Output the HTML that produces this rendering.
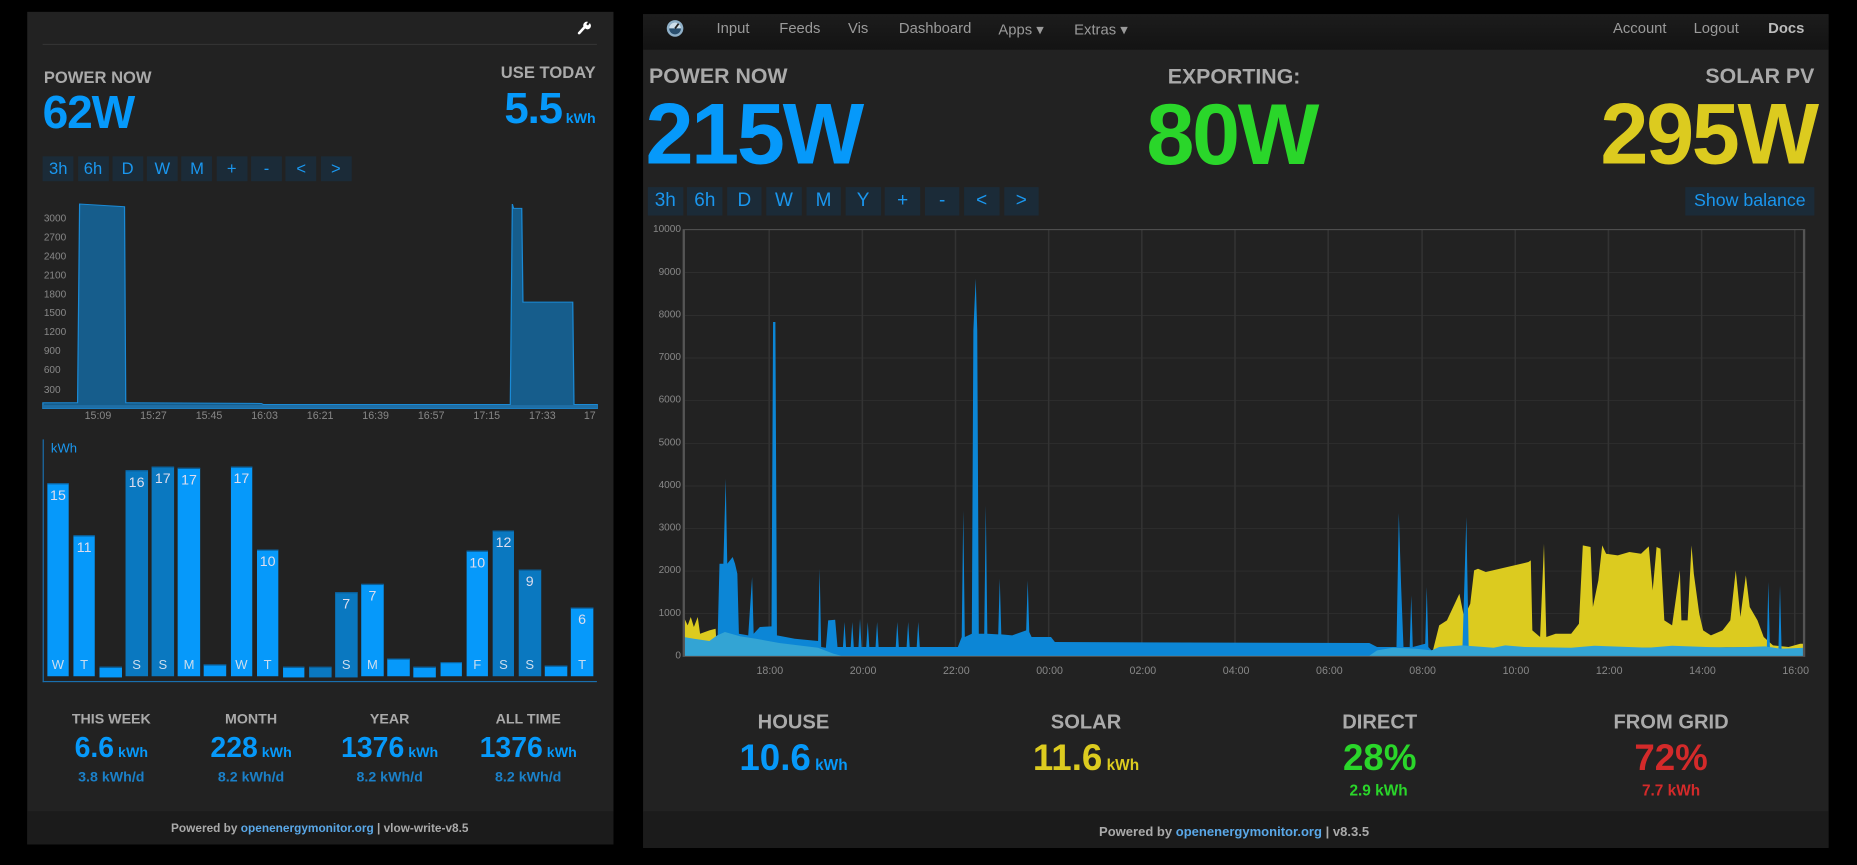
<!DOCTYPE html>
<html><head><meta charset="utf-8"><style>
*{margin:0;padding:0;box-sizing:border-box}
html,body{width:1857px;height:864px;background:#000;overflow:hidden;font-family:"Liberation Sans",sans-serif}
#s{position:absolute;left:0;top:0;width:1568px;height:730px;transform:scale(1.18431);transform-origin:0 0}
.a{position:absolute;white-space:nowrap}
.g{color:#aaa;font-weight:bold}
.b{color:#0699fa;font-weight:bold}
.btn{position:absolute;background:#1b2b38;color:#1a97ef;text-align:center}
.yl{position:absolute;font-size:9px;color:#888}
.xl{position:absolute;font-size:9px;color:#888;transform:translateX(-50%)}
.c{transform:translate(-50%,-50%);text-align:center}
</style></head><body><div id="s">
<!-- LEFT PANEL -->
<div class="a" style="left:23px;top:10px;width:495px;height:703px;background:#222"></div>
<div class="a" style="left:23px;top:685px;width:495px;height:28px;background:#1b1b1b"></div>
<div class="a" style="left:36px;top:37px;width:468px;height:1px;background:#333"></div>
<svg class="a" style="left:487px;top:17px" width="12" height="12" viewBox="0 0 12 12"><path d="M2 11 L7 5.5" stroke="#fff" stroke-width="2.2" stroke-linecap="round"/><path d="M6 6 A3 3 0 0 1 9.5 1.5 L8 3.5 L9.5 4.5 L11 2.5 A3 3 0 0 1 7 7 Z" fill="#fff"/></svg>
<div class="a g" style="left:37px;top:57px;font-size:14px">POWER NOW</div>
<div class="a b" style="left:36px;top:74px;font-size:39px;letter-spacing:-1px">62W</div>
<div class="a g" style="right:1065px;top:53px;font-size:14px">USE TODAY</div>
<div class="a b" style="right:1065px;top:71px;font-size:37px"><span style="letter-spacing:-1px">5.5</span><span style="font-size:12px"> kWh</span></div>
<div id="lb"></div>
<svg class="a" style="left:0;top:0" width="540.5" height="363.2" viewBox="0 0 1568 1290" preserveAspectRatio="none">
<path d="M105,1225 L105,1208 L190,1208 L195,612 L305,620 L308,1208 L640,1210 L645,1213 L1250,1213 L1255,612 L1258,625 L1278,625 L1281,906 L1403,906 L1406,1213 L1463,1213 L1463,1225 Z" fill="#165d8c" stroke="#1a8ad6" stroke-width="3"/>
<rect x="105" y="1215" width="1358" height="10" fill="#1f6ea5"/>
</svg>
<div id="lax"></div>
<div class="a" style="left:36px;top:371px;width:1px;height:205px;background:#1a6fae"></div>
<div class="a" style="left:36px;top:575px;width:468px;height:1px;background:#1a6fae"></div>
<div class="a" style="left:43px;top:373px;font-size:11px;color:#1a97ef">kWh</div>
<div id="bars"></div>
<div class="a g c" style="left:94px;top:607px;font-size:12px">THIS WEEK</div>
<div class="a g c" style="left:212px;top:607px;font-size:12px">MONTH</div>
<div class="a g c" style="left:329px;top:607px;font-size:12px">YEAR</div>
<div class="a g c" style="left:446px;top:607px;font-size:12px">ALL TIME</div>
<div class="a b c" style="left:94px;top:632px;font-size:24px">6.6<span style="font-size:12px"> kWh</span></div>
<div class="a b c" style="left:212px;top:632px;font-size:24px">228<span style="font-size:12px"> kWh</span></div>
<div class="a b c" style="left:329px;top:632px;font-size:24px">1376<span style="font-size:12px"> kWh</span></div>
<div class="a b c" style="left:446px;top:632px;font-size:24px">1376<span style="font-size:12px"> kWh</span></div>
<div class="a c" style="left:94px;top:656px;font-size:12px;font-weight:bold;color:#1b80c8">3.8 kWh/d</div>
<div class="a c" style="left:212px;top:656px;font-size:12px;font-weight:bold;color:#1b80c8">8.2 kWh/d</div>
<div class="a c" style="left:329px;top:656px;font-size:12px;font-weight:bold;color:#1b80c8">8.2 kWh/d</div>
<div class="a c" style="left:446px;top:656px;font-size:12px;font-weight:bold;color:#1b80c8">8.2 kWh/d</div>
<div class="a c" style="left:270px;top:700px;font-size:10px;font-weight:bold;color:#aaa">Powered by <span style="color:#5aa8e8">openenergymonitor.org</span> | vlow-write-v8.5</div>

<!-- RIGHT PANEL -->
<div class="a" style="left:543px;top:12px;width:1001px;height:704px;background:#222"></div>
<div class="a" style="left:543px;top:12px;width:1001px;height:30px;background:linear-gradient(#1c1c1c,#131313)"></div>
<div class="a" style="left:543px;top:685px;width:1001px;height:31px;background:#1b1b1b"></div>
<svg class="a" style="left:562px;top:16px" width="16" height="16" viewBox="0 0 16 16"><circle cx="8" cy="8" r="7" fill="#8fb0c8"/><circle cx="8" cy="8" r="5" fill="#2a4f6e"/><path d="M3 8 A5 5 0 0 1 13 8" fill="#cfe0ec"/><path d="M8 8 L11 4" stroke="#222" stroke-width="1.5"/></svg>
<div id="nav"></div>
<div class="a g" style="left:548px;top:54px;font-size:18px">POWER NOW</div>
<div class="a g c" style="left:1042px;top:65px;font-size:18px">EXPORTING:</div>
<div class="a g" style="right:36px;top:54px;font-size:18px">SOLAR PV</div>
<div class="a" style="left:545px;top:72px;font-size:73px;font-weight:bold;color:#0699fa;letter-spacing:-2px">215W</div>
<div class="a c" style="left:1040px;top:114px;font-size:73px;font-weight:bold;color:#2ad62a;letter-spacing:-2px">80W</div>
<div class="a" style="right:34px;top:72px;font-size:73px;font-weight:bold;color:#dccb1f;letter-spacing:-2px">295W</div>
<div id="rb"></div>
<div class="btn" style="left:1423px;top:158px;width:109px;height:24px;line-height:24px;font-size:15px">Show balance</div>
<svg class="a" style="left:540.4px;top:185.8px" width="1027.9" height="388.5" viewBox="0 0 1568 1380" preserveAspectRatio="none">
<g stroke="#333" stroke-width="2">
<path d="M57,157H1500M57,286H1500M57,413H1500M57,541H1500M57,670H1500M57,797H1500M57,925H1500M57,1052H1500M57,1180H1500"/>
<path d="M167,28V1308M287,28V1308M407,28V1308M527,28V1308M647,28V1308M767,28V1308M887,28V1308M1008,28V1308M1128,28V1308M1248,28V1308M1368,28V1308M1488,28V1308"/>
</g>
<path fill="#dccb1f" d="M57,1308 L57,1190 L62,1215 L66,1190 L70,1220 L75,1190 L78,1240 L90,1230 L98,1225 L100,1308 Z"/>
<path fill="#dccb1f" d="M1020,1308 L1030,1215 L1040,1200 L1050,1150 L1056,1120 L1062,1190 L1070,1150 L1075,1050 L1080,1045 L1090,1055 L1145,1025 L1148,1020 L1150,1230 L1160,1250 L1165,970 L1168,1250 L1180,1240 L1200,1240 L1210,1210 L1215,975 L1225,980 L1228,1160 L1235,1080 L1240,975 L1245,1000 L1260,1005 L1275,995 L1290,1000 L1300,978 L1305,1110 L1310,980 L1315,985 L1320,1200 L1330,1215 L1340,1050 L1342,1200 L1350,1200 L1355,975 L1358,1060 L1365,1180 L1370,1230 L1380,1245 L1395,1230 L1405,1200 L1412,1050 L1418,1190 L1425,1065 L1430,1160 L1440,1200 L1448,1250 L1460,1275 L1480,1280 L1495,1270 L1500,1270 L1500,1308 Z"/>
<path fill="#0c86d6" d="M100,1308 L103,1030 L108,1030 L111,775 L113,1030 L120,1010 L123,1030 L126,1060 L128,1240 L140,1245 L145,1070 L147,1240 L155,1220 L170,1218 L172,305 L175,305 L177,1245 L200,1255 L230,1262 L232,1045 L234,1280 L240,1282 L243,1200 L252,1198 L255,1280 L262,1280 L264,1205 L266,1280 L272,1280 L274,1205 L276,1280 L282,1280 L284,1195 L286,1280 L292,1280 L294,1205 L296,1280 L304,1280 L306,1205 L308,1280 L330,1280 L332,1205 L334,1280 L344,1280 L346,1205 L348,1280 L357,1280 L359,1205 L361,1280 L410,1280 L415,1250 L417,870 L419,1250 L428,1240 L430,330 L433,175 L435,330 L437,1240 L444,1240 L446,855 L448,1240 L462,1242 L464,1075 L466,1242 L480,1245 L498,1230 L500,1080 L502,1235 L505,1250 L530,1250 L535,1265 L940,1268 L950,1280 L975,1280 L978,878 L981,1100 L984,1280 L992,1280 L994,1125 L996,1280 L1012,1270 L1014,1100 L1016,1280 L1020,1290 L1060,1280 L1065,890 L1068,1285 L1452,1280 L1454,1085 L1456,1285 L1467,1285 L1469,1095 L1471,1285 L1500,1290 L1500,1308 Z"/>
<path fill="#33a4d4" d="M57,1308 L57,1250 L70,1255 L90,1262 L100,1245 L110,1235 L130,1248 L150,1255 L180,1268 L230,1282 L250,1300 L260,1306 L940,1306 L950,1290 L970,1282 L1000,1285 L1020,1290 L1030,1280 L1060,1275 L1100,1282 L1115,1275 L1140,1280 L1200,1282 L1230,1276 L1300,1282 L1330,1276 L1400,1282 L1450,1278 L1470,1285 L1500,1282 L1500,1308 Z"/>
<rect x="57" y="28" width="1443" height="1280" fill="none" stroke="#555" stroke-width="3"/>
</svg>
<div id="rax"></div>
<div class="a g c" style="left:670px;top:610px;font-size:17px">HOUSE</div>
<div class="a g c" style="left:917px;top:610px;font-size:17px">SOLAR</div>
<div class="a g c" style="left:1165px;top:610px;font-size:17px">DIRECT</div>
<div class="a g c" style="left:1411px;top:610px;font-size:17px">FROM GRID</div>
<div class="a c" style="left:670px;top:640px;font-size:31px;font-weight:bold;color:#0699fa">10.6<span style="font-size:13px"> kWh</span></div>
<div class="a c" style="left:917px;top:640px;font-size:31px;font-weight:bold;color:#dccb1f">11.6<span style="font-size:13px"> kWh</span></div>
<div class="a c" style="left:1165px;top:640px;font-size:31px;font-weight:bold;color:#2ad62a">28%</div>
<div class="a c" style="left:1411px;top:640px;font-size:31px;font-weight:bold;color:#d42a2a">72%</div>
<div class="a c" style="left:1164px;top:667px;font-size:13px;font-weight:bold;color:#2ad62a">2.9 kWh</div>
<div class="a c" style="left:1411px;top:667px;font-size:13px;font-weight:bold;color:#d42a2a">7.7 kWh</div>
<div class="a c" style="left:1042px;top:703px;font-size:11px;font-weight:bold;color:#aaa">Powered by <span style="color:#5aa8e8">openenergymonitor.org</span> | v8.3.5</div>
</div>
<script>
function add(id,h){document.getElementById(id).insertAdjacentHTML('beforeend',h)}
var lb=['3h','6h','D','W','M','+','-','<','>'];
lb.forEach(function(t,i){add('lb','<div class="btn" style="left:'+(36.2+i*29.3)+'px;top:132px;width:26px;height:21px;line-height:21px;font-size:14px">'+t.replace('<','&lt;').replace('>','&gt;')+'</div>')});
var rb=['3h','6h','D','W','M','Y','+','-','<','>'];
rb.forEach(function(t,i){add('rb','<div class="btn" style="left:'+(547+i*33.4)+'px;top:158px;width:29.5px;height:24px;line-height:24px;font-size:16px">'+t.replace('<','&lt;').replace('>','&gt;')+'</div>')});
[3000,2700,2400,2100,1800,1500,1200,900,600,300].forEach(function(v,i){add('lax','<div class="yl" style="left:37px;top:'+(179+i*16.06)+'px;font-size:8.5px">'+v+'</div>')});
['15:09','15:27','15:45','16:03','16:21','16:39','16:57','17:15','17:33'].forEach(function(t,i){add('lax','<div class="xl" style="left:'+(82.7+i*46.9)+'px;top:346px">'+t+'</div>')});
add('lax','<div class="xl" style="left:498px;top:346px">17</div>');
var tops=[160,316,708,121,110,113,703,108,357,708,708,486,460,685,708,695,361,301,419,705,533];
var vals=['15','11','','16','17','17','','17','10','','','7','7','','','','10','12','9','','6'];
var days=['W','T','','S','S','M','','W','T','','','S','M','','','','F','S','S','','T'];
var dark=[3,4,10,11,17,18];
tops.forEach(function(t,i){var zx=115+i*64.2;var x=zx*0.3447,w=54*0.3447;var y=(430+t/3)/1.184,yb=571.5;
var col=dark.indexOf(i)>=0?'#0a78c0':'#0699fa';
var h='<div class="a" style="left:'+x+'px;top:'+y+'px;width:'+w+'px;height:'+(yb-y)+'px;background:'+col+';border-top:1px solid #0b5f99"></div>';
if(vals[i])h+='<div class="a" style="left:'+x+'px;top:'+(y+3)+'px;width:'+w+'px;text-align:center;font-size:12px;color:#dde">'+vals[i]+'</div>';
if(days[i])h+='<div class="a" style="left:'+x+'px;top:556px;width:'+w+'px;text-align:center;font-size:11px;color:#cde">'+days[i]+'</div>';
add('bars',h)});
var nav=[['Input',605],['Feeds',658],['Vis',716],['Dashboard',759],['Apps \u25BE',843],['Extras \u25BE',907],['Account',1362],['Logout',1430]];
nav.forEach(function(n){add('nav','<div class="a" style="left:'+n[1]+'px;top:17px;font-size:12.5px;color:#9a9a9a">'+n[0]+'</div>')});
add('nav','<div class="a" style="left:1493px;top:17px;font-size:12.5px;color:#bbb;font-weight:bold">Docs</div>');
[10000,9000,8000,7000,6000,5000,4000,3000,2000,1000,0].forEach(function(v,i){add('rax','<div class="yl" style="right:'+(1568-575)+'px;top:'+(188+i*36.03)+'px;font-size:8.5px;text-align:right">'+v+'</div>')});
['18:00','20:00','22:00','00:00','02:00','04:00','06:00','08:00','10:00','12:00','14:00','16:00'].forEach(function(t,i){add('rax','<div class="xl" style="left:'+(650+i*78.75)+'px;top:561px">'+t+'</div>')});
</script>
</body></html>
